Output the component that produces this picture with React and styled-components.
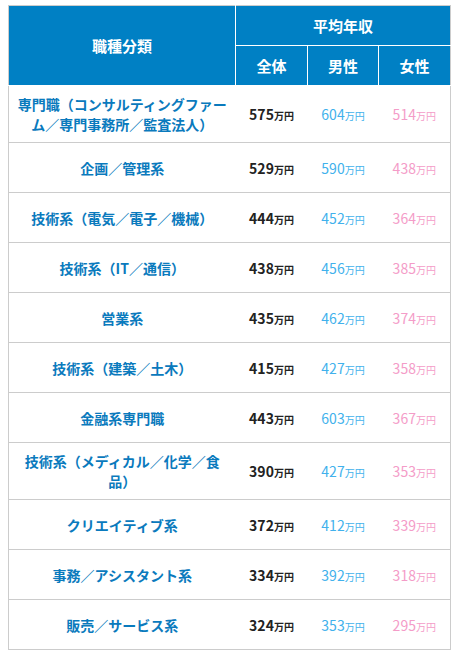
import React from "react";
import styled, { createGlobalStyle } from "styled-components";

const rows = [
  { job: "専門職（コンサルティングファーム／専門事務所／監査法人）", all: 575, male: 604, female: 514 },
  { job: "企画／管理系", all: 529, male: 590, female: 438 },
  { job: "技術系（電気／電子／機械）", all: 444, male: 452, female: 364 },
  { job: "技術系（IT／通信）", all: 438, male: 456, female: 385 },
  { job: "営業系", all: 435, male: 462, female: 374 },
  { job: "技術系（建築／土木）", all: 415, male: 427, female: 358 },
  { job: "金融系専門職", all: 443, male: 603, female: 367 },
  { job: "技術系（メディカル／化学／食品）", all: 390, male: 427, female: 353 },
  { job: "クリエイティブ系", all: 372, male: 412, female: 339 },
  { job: "事務／アシスタント系", all: 334, male: 392, female: 318 },
  { job: "販売／サービス系", all: 324, male: 353, female: 295 },
];

const colors = {
  all: "#222222",
  male: "#41b1ec",
  female: "#f49cc8",
};

const App = () => {
  return (
    <Wrapper>
      <GlobalStyle />
      <Table>
        <colgroup>
          <col style={{ width: 227 }} />
          <col style={{ width: 72 }} />
          <col style={{ width: 71 }} />
          <col style={{ width: 72 }} />
        </colgroup>
        <thead>
          <HeadRow>
            <Th rowSpan={2}>職種分類</Th>
            <Th colSpan={3}>平均年収</Th>
          </HeadRow>
          <HeadRow>
            <Th>全体</Th>
            <Th>男性</Th>
            <Th>女性</Th>
          </HeadRow>
        </thead>
        <tbody>
          {rows.map((r) => (
            <Row key={r.job}>
              <JobCell>{r.job}</JobCell>
              <NumCell $color={colors.all} $bold>
                {r.all}
                <Unit>万円</Unit>
              </NumCell>
              <NumCell $color={colors.male}>
                {r.male}
                <Unit>万円</Unit>
              </NumCell>
              <NumCell $color={colors.female}>
                {r.female}
                <Unit>万円</Unit>
              </NumCell>
            </Row>
          ))}
        </tbody>
      </Table>
    </Wrapper>
  );
};

const GlobalStyle = createGlobalStyle`
  body {
    margin: 0;
    background: #fff;
    font-family: "Noto Sans CJK JP", "Noto Sans", sans-serif;
  }
`;

const Wrapper = styled.div`
  padding: 5px 8px 0 8px;
`;

const Table = styled.table`
  width: 442px;
  table-layout: fixed;
  border-collapse: collapse;
  border: 1px solid #cccccc;
`;

const HeadRow = styled.tr`
  height: 40px;
`;

const Th = styled.th`
  background-color: #0080c4;
  color: #fff;
  font-size: 15px;
  font-weight: 700;
  text-align: center;
  vertical-align: middle;
  padding: 0;
  border: 1px solid #fff;
  border-top: none;
  &:first-child {
    border-left: none;
  }
  &:last-child {
    border-right: none;
  }
`;

const Row = styled.tr`
  height: 50px;
  border-bottom: 1px solid #cccccc;
`;

const JobCell = styled.td`
  color: #0a7abd;
  font-size: 14px;
  font-weight: 700;
  line-height: 20px;
  text-align: center;
  vertical-align: middle;
  padding: 8px 8px;
`;

const NumCell = styled.td`
  color: ${(p) => p.$color};
  font-size: 14px;
  font-weight: ${(p) => (p.$bold ? 700 : 400)};
  text-align: center;
  vertical-align: middle;
  padding: 0;
  white-space: nowrap;
`;

const Unit = styled.span`
  font-size: 10px;
`;

export default App;
